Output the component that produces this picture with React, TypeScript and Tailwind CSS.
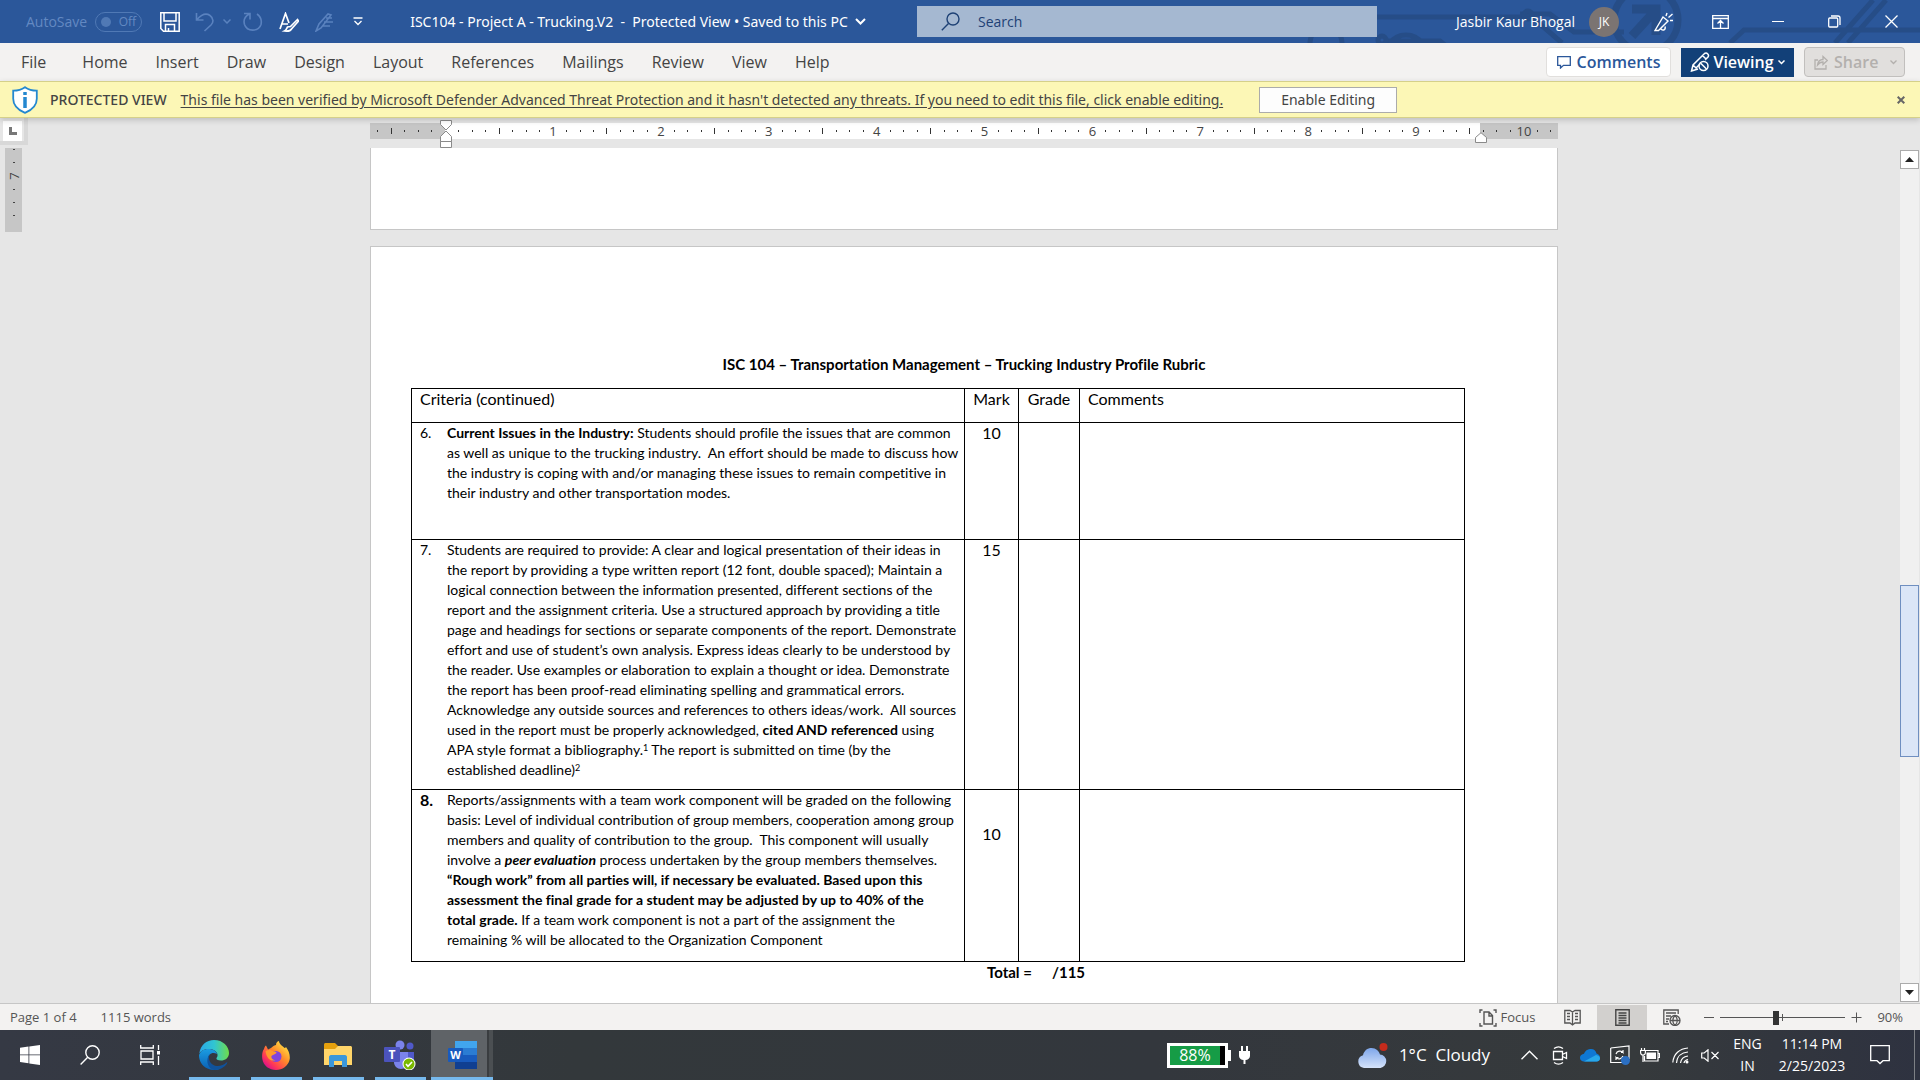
import type { ReactNode } from "react";

const tabs = ["Home", "Insert", "Draw", "Design", "Layout", "References", "Mailings", "Review", "View", "Help"];

// one entry per eighth of an inch, zero sits on the left margin
const ticks = Array.from({ length: 88 }, (_, i) => i - 5);

function Tick({ n }: { n: number }) {
  if (n > 0 && n % 8 === 0) return <span className="text-[13px] leading-4">{n / 8}</span>;
  if (n === 0) return null;
  if (n % 4 === 0) return <span className="h-[6px] w-px bg-[#333333]" />;
  return <span className="h-[2px] w-px bg-[#333333]" />;
}

function Ruler() {
  return (
    <div className="relative mx-auto mt-[5px] w-[1188px]">
      <div className="flex h-4 items-center bg-[linear-gradient(to_right,#c6c6c6_75px,#ffffff_75px,#ffffff_1110px,#c6c6c6_1110px)] pl-px text-[#444444]">
        {ticks.map((n) => (
          <div key={n} className="flex w-0 flex-1 items-center justify-center">
            <Tick n={n} />
          </div>
        ))}
      </div>
      <svg className="absolute -top-[3px] left-[70px]" width="12" height="28" viewBox="0 0 12 28" fill="#fff" stroke="#8a8a8a">
        <path d="M.5.5h11v4L6 10 .5 4.5zM.5 21.500v-5L6 11l5.500 5.500v5zM.5 21.500h11v6H.5z" />
      </svg>
      <svg className="absolute top-[9px] left-[1105px]" width="12" height="11" viewBox="0 0 12 11" fill="#fff" stroke="#8a8a8a">
        <path d="M.5 10.500v-5L6 .7l5.500 4.800v5z" />
      </svg>
    </div>
  );
}

function TitleBar() {
  return (
    <header className="relative flex h-[43px] shrink-0 items-center bg-[#2b579a] text-sm text-white">
      <svg className="absolute top-0 right-0" width="620" height="43" viewBox="0 0 620 43" fill="none" stroke="#264d87" strokeWidth="5">
        <path d="M77 17h160M90 43a20 20 0 0 1 32 0M10 43a16 16 0 0 1 32 0M85 41h55l10 8M152 17h80l30 26M220 14h30l24 18h50" />
        <circle cx="82" cy="40" r="4" />
        <circle cx="228" cy="15" r="4" />
        <circle cx="346" cy="20" r="32" strokeWidth="7" />
        <path d="M332 36l22-24M332 9h24v26" strokeWidth="9" />
        <path d="M430 43l14-13h176M535 43l38-43M548 43l38-43" />
      </svg>

      <div className="relative flex w-[917px] shrink-0 items-center">
        <label className="ml-[26px] flex items-center gap-2 text-[#6389c2]">
          AutoSave
          <input type="checkbox" className="peer sr-only" disabled />
          <span className="flex h-5 w-[47px] items-center justify-between rounded-full border border-[#5079b5] px-[5px] text-xs">
            <i className="size-[10px] rounded-full bg-[#5079b5]" />
            Off
          </span>
        </label>
        <button aria-label="Save" className="ml-[18px]">
          <svg width="20" height="20" viewBox="0 0 20 20" fill="none" stroke="#fff" strokeWidth="1.500">
            <path d="M.8.8h18.400v18.400H3.500L.8 16.500zM4 1v8h12V1M5.500 19v-6.500h9V19M8.500 19v-3" />
          </svg>
        </button>
        <button aria-label="Undo" className="ml-[15px]">
          <svg width="20" height="20" viewBox="0 0 20 20" fill="none" stroke="#5a82bf" strokeWidth="1.600">
            <path d="M1.500 1v7h7M2 7.500C6 3 11 .8 15 3.500c4 3 3.500 7 1 9.500L9.500 19" />
          </svg>
        </button>
        <svg className="ml-2" width="8" height="5" viewBox="0 0 8 5" fill="none" stroke="#5a82bf" strokeWidth="1.500">
          <path d="M.5.5L4 4 7.500.5" />
        </svg>
        <button aria-label="Redo" className="ml-3">
          <svg width="20" height="20" viewBox="0 0 20 20" fill="none" stroke="#5a82bf" strokeWidth="1.600">
            <path d="M1 1.500h6v6M6.500 2C1.500 4.500.5 9 1.500 12.500c2.500 7.500 14 7.500 16.500 0 1-4.500-.5-8-4-10.500" />
          </svg>
        </button>
        <button aria-label="Editor" className="ml-4">
          <svg width="20" height="20" viewBox="0 0 20 20" fill="none" stroke="#fff" strokeWidth="1.700">
            <path d="M1 17L6.500 1.500 10 11M3 12h6M18.500 7.500l-7 7-3 .5c-1 1.500-1 3-3 4 3 .3 6 0 7-2l7-8z" />
          </svg>
        </button>
        <button aria-label="Format painter" className="ml-4">
          <svg width="20" height="20" viewBox="0 0 20 20" fill="none" stroke="#5a82bf" strokeWidth="1.600">
            <path d="M1 19l3-7L13 2l3 1-10 13zM11 6h6M9 10h9M8 14h7" />
          </svg>
        </button>
        <button aria-label="Customize quick access" className="ml-[18px]">
          <svg width="10" height="9" viewBox="0 0 10 9" fill="none" stroke="#fff" strokeWidth="1.300">
            <path d="M.5 1h9M1.500 4L5 7.500 8.500 4" />
          </svg>
        </button>
        <h1 className="ml-[47px] flex items-center font-['Noto_Sans',sans-serif] whitespace-pre">
          {"ISC104 - Project A - Trucking.V2  -  Protected View • Saved to this PC"}
          <svg className="ml-[7px]" width="11" height="7" viewBox="0 0 11 7" fill="none" stroke="#fff" strokeWidth="2">
            <path d="M1 1l4.500 4.500L10 1" />
          </svg>
        </h1>
      </div>

      <label className="relative flex h-[31px] w-[460px] items-center gap-[18px] bg-[#a5b8d1] pl-6">
        <svg width="19" height="19" viewBox="0 0 19 19" fill="none" stroke="#1e4175" strokeWidth="1.400">
          <circle cx="12" cy="7" r="6" />
          <path d="M7.500 11.500L.8 18.200" />
        </svg>
        <input aria-label="Search" placeholder="Search" className="min-w-0 flex-1 bg-transparent outline-none placeholder:text-[#1e4175]" />
      </label>

      <div className="relative ml-auto flex items-center">
        <span>Jasbir Kaur Bhogal</span>
        <span className="mr-4 ml-[14px] flex size-[30px] items-center justify-center rounded-full bg-[#7b7472] text-xs">JK</span>
        <WinButton label="Designer">
          <svg width="20" height="20" viewBox="0 0 20 20" fill="none" stroke="#fff" strokeWidth="1.400">
            <path d="M1 18.500L9 5l5 4L4.500 18.500zM7 17c2 2 5 1 4-2.500M12 4l1-3M14.500 5.500L18.500 2M16 8.500h3" />
          </svg>
        </WinButton>
        <WinButton label="Ribbon display options">
          <svg width="17" height="14" viewBox="0 0 17 14" fill="none" stroke="#fff" strokeWidth="1.300">
            <path d="M.7.7h15.600v12.600H.7zM.7 3.500h15.600M8.500 13V6M5.500 8.500l3-3 3 3" />
          </svg>
        </WinButton>
        <WinButton label="Minimize">
          <span className="h-px w-3 bg-white" />
        </WinButton>
        <WinButton label="Restore">
          <svg width="13" height="13" viewBox="0 0 13 13" fill="none" stroke="#fff" strokeWidth="1.300">
            <rect x=".7" y="3" width="9" height="9" rx="1" />
            <path d="M3 1h7a2 2 0 0 1 2 2v7" />
          </svg>
        </WinButton>
        <WinButton label="Close">
          <svg width="13" height="13" viewBox="0 0 13 13" stroke="#fff" strokeWidth="1.300">
            <path d="M.5.5l12 12M12.500.5l-12 12" />
          </svg>
        </WinButton>
      </div>
    </header>
  );
}

function WinButton({ label, children }: { label: string; children: ReactNode }) {
  return (
    <button aria-label={label} className="flex h-[43px] w-[57px] items-center justify-center">
      {children}
    </button>
  );
}

function TabBar() {
  return (
    <nav className="flex h-[38px] shrink-0 items-center bg-[#f3f2f1] pr-[15px] text-base text-[#444444]">
      <button className="mr-2 ml-[7px] px-[14px]">File</button>
      {tabs.map((t) => (
        <button key={t} className="px-[14px]">{t}</button>
      ))}
      <button className="ml-auto flex h-[30px] w-[125px] items-center justify-center gap-[6px] rounded-sm border border-[#e1dfdd] bg-white font-semibold text-[#2b579a]">
        <svg width="14" height="13" viewBox="0 0 14 13" fill="none" stroke="#2b579a" strokeWidth="1.300">
          <path d="M.7.7h12.600v8.600H6.500L3.500 12V9.300H.7z" />
        </svg>
        Comments
      </button>
      <button className="ml-[10px] flex h-[29px] w-[113px] items-center justify-center gap-[3px] bg-[#124078] font-semibold text-white">
        <svg width="20" height="20" viewBox="0 0 20 20" fill="none" stroke="#fff" strokeWidth="1.500">
          <path d="M8 17l-6.500 2L3 13 14.500 1.500c2.500-1.500 5 1.500 3.500 3.500l-3 3M12.500 3.500L16 7M3 13l3 3 4-4" />
          <circle cx="13.500" cy="14" r="4.500" />
          <path d="M10.500 11l6 6" />
        </svg>
        Viewing
        <svg className="ml-px" width="7" height="5" viewBox="0 0 7 5" fill="none" stroke="#fff" strokeWidth="1.500">
          <path d="M.5.5l3 3 3-3" />
        </svg>
      </button>
      <button disabled className="ml-[10px] flex h-[30px] w-[101px] items-center rounded-sm border border-[#c1bfbd] bg-[#e1dfdd] pl-[9px] font-semibold text-[#b3b0ad]">
        <svg width="14" height="15" viewBox="0 0 14 15" fill="none" stroke="#b3b0ad" strokeWidth="1.300">
          <path d="M4 5H1v9h11v-4M3.500 10C4 6 6 4.500 9 4.500V1.500l4.300 4L9 9.500V7C6.500 7 5 8 3.500 10z" />
        </svg>
        <span className="ml-[6px]">Share</span>
        <svg className="ml-3" width="7" height="5" viewBox="0 0 7 5" fill="none" stroke="#b3b0ad" strokeWidth="1.300">
          <path d="M.5.5l3 3 3-3" />
        </svg>
      </button>
    </nav>
  );
}

function ProtectedBar() {
  return (
    <div className="relative z-10 flex h-[37px] shrink-0 items-center border-y border-[#d5d08a] bg-[#fcf7b6] font-['Noto_Sans',sans-serif] text-sm text-[#444444] shadow-[0_2px_6px_rgba(0,0,0,0.18)]">
      <svg className="ml-[12px]" width="26" height="28" viewBox="0 0 26 28" fill="#fff" stroke="#2488d0" strokeWidth="1.800">
        <path d="M13 1.200c3.500 2.500 7.500 3.500 11.800 3.500v8C24.800 19 20 24 13 26.800 6 24 1.200 19 1.200 12.700v-8C5.500 4.700 9.500 3.700 13 1.200z" />
        <path d="M13 6v3M13 11v11" strokeWidth="3.500" />
      </svg>
      <strong className="ml-3 font-medium">PROTECTED VIEW</strong>
      <a href="#" className="ml-[14px] whitespace-nowrap underline underline-offset-2">
        This file has been verified by Microsoft Defender Advanced Threat Protection and it hasn't detected any threats. If you need to edit this file, click enable editing.
      </a>
      <button className="ml-9 h-[26px] w-[138px] border border-[#ababab] bg-[#fdfdfd]">Enable Editing</button>
      <button aria-label="Dismiss" className="mr-[15px] ml-auto">
        <svg width="8" height="8" viewBox="0 0 8 8" stroke="#666" strokeWidth="2">
          <path d="M.7.7l6.600 6.600M7.300.7L.7 7.300" />
        </svg>
      </button>
    </div>
  );
}

function RubricRow({ no, mark, height, markClass, children }: { no: ReactNode; mark: string; height: string; markClass?: string; children: ReactNode }) {
  return (
    <tr className={height}>
      <td className="border border-black px-2 align-top">
        <div className="flex text-[14px] leading-5 whitespace-nowrap">
          <span className="w-[27px] shrink-0">{no}</span>
          <p>{children}</p>
        </div>
      </td>
      <td className={"border border-black text-center align-top " + (markClass ?? "")}>{mark}</td>
      <td className="border border-black" />
      <td className="border border-black" />
    </tr>
  );
}

function Rubric() {
  return (
    <>
      <h2 className="mb-3 text-center text-[15px] leading-6 font-bold">
        ISC 104 – Transportation Management – Trucking Industry Profile Rubric
      </h2>
      <table className="ml-[40px] w-[1054px] table-fixed border-collapse text-base leading-5">
        <colgroup>
          <col className="w-[553px]" />
          <col className="w-[54px]" />
          <col className="w-[61px]" />
          <col />
        </colgroup>
        <thead>
          <tr className="h-[34px] text-left">
            <th className="border border-black px-2 align-top font-normal">Criteria (continued)</th>
            <th className="border border-black text-center align-top font-normal">Mark</th>
            <th className="border border-black text-center align-top font-normal">Grade</th>
            <th className="border border-black px-2 align-top font-normal">Comments</th>
          </tr>
        </thead>
        <tbody>
          <RubricRow no="6." mark="10" height="h-[117px]">
            <b>Current Issues in the Industry:</b> Students should profile the issues that are common<br />
            as well as unique to the trucking industry.&nbsp; An effort should be made to discuss how<br />
            the industry is coping with and/or managing these issues to remain competitive in<br />
            their industry and other transportation modes.
          </RubricRow>
          <RubricRow no="7." mark="15" height="h-[250px]">
            Students are required to provide: A clear and logical presentation of their ideas in<br />
            the report by providing a type written report (12 font, double spaced); Maintain a<br />
            logical connection between the information presented, different sections of the<br />
            report and the assignment criteria. Use a structured approach by providing a title<br />
            page and headings for sections or separate components of the report. Demonstrate<br />
            effort and use of student’s own analysis. Express ideas clearly to be understood by<br />
            the reader. Use examples or elaboration to explain a thought or idea. Demonstrate<br />
            the report has been proof-read eliminating spelling and grammatical errors.<br />
            Acknowledge any outside sources and references to others ideas/work.&nbsp; All sources<br />
            used in the report must be properly acknowledged, <b>cited AND referenced</b> using<br />
            APA style format a bibliography.<sup className="text-[9px]">1</sup> The report is submitted on time (by the<br />
            established deadline)<sup className="text-[9px]">2</sup>
          </RubricRow>
          <RubricRow no={<b className="text-base leading-5">8.</b>} mark="10" height="h-[172px]" markClass="pt-[34px]">
            Reports/assignments with a team work component will be graded on the following<br />
            basis: Level of individual contribution of group members, cooperation among group<br />
            members and quality of contribution to the group.&nbsp; This component will usually<br />
            involve a <b><i>peer evaluation</i></b> process undertaken by the group members themselves.<br />
            <b>“Rough work” from all parties will, if necessary be evaluated. Based upon this</b><br />
            <b>assessment the final grade for a student may be adjusted by up to 40% of the</b><br />
            <b>total grade.</b> If a team work component is not a part of the assignment the<br />
            remaining % will be allocated to the Organization Component
          </RubricRow>
        </tbody>
      </table>
      <p className="ml-[616px] flex gap-5 text-[15px] leading-5 font-bold">
        <span>Total =</span>
        <span>/115</span>
      </p>
    </>
  );
}

function ScrollArrow({ label, d }: { label: string; d: string }) {
  return (
    <button aria-label={label} className="flex h-[19px] w-full items-center justify-center border border-[#ababab] bg-white">
      <svg width="9" height="5" viewBox="0 0 9 5" fill="#222"><path d={d} /></svg>
    </button>
  );
}

function Workspace() {
  return (
    <main className="flex min-h-0 flex-1 bg-[#e6e6e6]">
      <div className="flex w-7 shrink-0 flex-col">
        <div className="flex h-[27px] items-start border-r-4 border-b-4 border-[#d8d8d8] pt-[3px] pl-[3px]">
          <button aria-label="Tab stop" className="flex h-5 w-[19px] items-center justify-center bg-white">
            <span className="size-2 border-b-[3px] border-l-[3px] border-[#777777]" />
          </button>
        </div>
        <div className="mt-[3px] ml-[5px] flex h-[84px] w-[17px] flex-col items-center bg-[#c6c6c6] text-[#444444]">
          <span className="mt-px h-px w-[2px] bg-[#444444]" />
          <span className="mt-3 h-px w-[2px] bg-[#444444]" />
          <span className="my-[6px] h-[14px] -rotate-90 text-[13px] leading-[14px]">7</span>
          <span className="h-px w-[2px] bg-[#444444]" />
          <span className="mt-3 h-px w-[2px] bg-[#444444]" />
          <span className="mt-3 h-px w-[2px] bg-[#444444]" />
        </div>
      </div>

      <div className="flex min-w-0 flex-1 flex-col">
        <Ruler />
        <div className="mt-[9px] min-h-0 flex-1 overflow-hidden">
          <div className="mx-auto h-[82px] w-[1188px] border border-t-0 border-[#c6c6c6] bg-white" />
          <article className="mx-auto mt-4 min-h-full w-[1188px] border border-[#c6c6c6] bg-white pt-[105px] font-[Lato,sans-serif] text-black [font-variant-ligatures:none]">
            <Rubric />
          </article>
        </div>
      </div>

      <div className="flex w-5 shrink-0 flex-col pt-8 pr-px pb-px">
        <ScrollArrow label="Scroll up" d="M4.500 0L9 5H0z" />
        <div className="flex flex-1 flex-col bg-[#f0f0f0]">
          <div className="mt-[416px] h-[172px] border border-[#6f8fc0] bg-[#dbe6f7]" />
        </div>
        <ScrollArrow label="Scroll down" d="M4.500 5L9 0H0z" />
      </div>
    </main>
  );
}

function StatusBar() {
  return (
    <footer className="flex h-[27px] shrink-0 items-center border-t border-[#c6c6c6] bg-[#f3f2f1] pt-px pr-[17px] pl-[10px] text-[13px] text-[#555555]">
      <span>Page 1 of 4</span>
      <span className="ml-6">1115 words</span>
      <button className="ml-auto flex items-center gap-[3px]">
        <svg width="18" height="18" viewBox="0 0 18 18" fill="none" stroke="#555" strokeWidth="1.400">
          <path d="M3.500 1H1v3M14.500 1H17v3M3.500 17H1v-3M14.500 17H17v-3M5 3h5l3.500 3.500V15H5zM10 3v4h3.500" />
        </svg>
        Focus
      </button>
      <button aria-label="Read mode" className="ml-3 flex h-[26px] w-[50px] items-center justify-center">
        <svg width="17" height="17" viewBox="0 0 17 17" fill="none" stroke="#555" strokeWidth="1.300">
          <path d="M8.500 3v13M.8 1.500H6L8.500 3 11 1.500h5.200v12.500H11L8.500 16 6 14H.8zM3 4.500h3M3 7.500h3M3 10.500h3M11 4.500h3M11 7.500h3M11 10.500h3" />
        </svg>
      </button>
      <button aria-label="Print layout" className="flex h-[26px] w-[50px] items-center justify-center bg-[#d2d0ce]">
        <svg width="15" height="17" viewBox="0 0 15 17" fill="none" stroke="#444" strokeWidth="1.400">
          <path d="M.8.8h13.400v15.400H.8zM3.500 4h8M3.500 6.500h8M3.500 9h8M3.500 11.500h8M3.500 14h8" />
        </svg>
      </button>
      <button aria-label="Web layout" className="flex h-[26px] w-[50px] items-center justify-center">
        <svg width="18" height="17" viewBox="0 0 18 17" fill="none" stroke="#555" strokeWidth="1.300">
          <path d="M6 15H.8V1h14.400v4M3 4h10M3 7h5M3 10h3M3 12.500h2" />
          <circle cx="12" cy="11.500" r="5" />
          <path d="M7 11.500h10M12 6.500c-3 3-3 7 0 10M12 6.500c3 3 3 7 0 10" />
        </svg>
      </button>
      <button aria-label="Zoom out" className="ml-[7px] h-px w-[10px] bg-[#555555]" />
      <span className="relative mx-[6px] flex w-[125px] items-center">
        <span className="absolute left-[62px] h-[7px] w-px bg-[#555555]" />
        <input
          type="range"
          aria-label="Zoom"
          min={10}
          max={190}
          defaultValue={90}
          className="h-px w-full appearance-none bg-[#555555] [&::-webkit-slider-thumb]:h-[14px] [&::-webkit-slider-thumb]:w-[6px] [&::-webkit-slider-thumb]:appearance-none [&::-webkit-slider-thumb]:bg-[#333333]"
        />
      </span>
      <button aria-label="Zoom in">
        <svg width="11" height="11" viewBox="0 0 11 11" stroke="#555"><path d="M5.500.5v10M.5 5.500h10" /></svg>
      </button>
      <span className="ml-[15px]">90%</span>
    </footer>
  );
}

function TaskApp({ label, active, children }: { label: string; active?: boolean; children: ReactNode }) {
  return (
    <button aria-label={label} className={"relative flex h-[50px] w-[62px] items-center justify-center " + (active ? "bg-[linear-gradient(90deg,#5f6367_56px,#3a3d40_56px,#3a3d40_58px,#4b4f52_58px)]" : "")}>
      {children}
      <span className={"absolute bottom-0 h-[3px] bg-[#76b9ed] " + (active ? "w-full" : "w-[51px]")} />
    </button>
  );
}

function Taskbar() {
  return (
    <div className="flex h-[50px] shrink-0 items-center bg-[linear-gradient(90deg,#353944,#33383b_30%,#33373d_60%,#363a3c_85%,#2e3240)] text-white">
      <button aria-label="Start" className="flex w-[60px] justify-center">
        <svg width="20" height="20" viewBox="0 0 20 20" fill="#fff">
          <path d="M0 2.800l8.500-1.200v7.900H0zM9.300 1.500L20 0v9.500H9.300zM0 10.300h8.500v8L0 17.100zM9.300 10.300H20V20L9.300 18.500z" />
        </svg>
      </button>
      <button aria-label="Search" className="flex w-[60px] justify-center">
        <svg width="20" height="20" viewBox="0 0 20 20" fill="none" stroke="#fff" strokeWidth="1.400">
          <circle cx="12.500" cy="7.500" r="6.700" />
          <path d="M7.700 12.300L.6 19.400" />
        </svg>
      </button>
      <button aria-label="Task view" className="mr-[3px] flex w-[60px] justify-center">
        <svg width="21" height="20" viewBox="0 0 21 20" fill="none" stroke="#fff" strokeWidth="1.300">
          <path d="M.7 0v3h12.600V0M.7 20v-3h12.600v3M1 6h12v8H1zM18.500 0v5M18.500 11v9" />
          <path d="M17 6h3v3.500h-3z" fill="#fff" stroke="none" />
        </svg>
      </button>

      <TaskApp label="Edge">
        <svg width="30" height="30" viewBox="0 0 30 30">
          <defs>
            <linearGradient id="edgeTop" x1="0" x2="1"><stop offset="0" stopColor="#2aa7e8" /><stop offset=".5" stopColor="#30c5d2" /><stop offset="1" stopColor="#6fdc4a" /></linearGradient>
            <linearGradient id="edgeLeft" x1="0" y1="0" x2="0" y2="1"><stop offset="0" stopColor="#1b9de2" /><stop offset="1" stopColor="#0a5fb4" /></linearGradient>
          </defs>
          <path d="M.3 13.500C1.500 5 7.500 0 15 0c9 0 15 6.500 15 13 0 5-4 7.500-8 7.500-3.500 0-5-1.200-4.500-2.500 3-3.500-.5-8.500-6-9C6 8.500 2 10.500.3 13.500z" fill="url(#edgeTop)" />
          <path d="M0 15C1.500 10.500 6 8.500 11 9c4 .5 6.500 2.500 7 5-6-3-10 2-8.500 7 1.500 5 6 8 11 8-3 1.500-8 1.500-12-.5C3 26 0 21 0 15z" fill="url(#edgeLeft)" />
          <path d="M11.500 13.500C8 18 11 25 17 26c4 .5 8-1 10.500-3.500.8-.5 1 .3.500 1-3 4.500-8.500 7-14 6.300C7.500 27 6.500 18 11.500 13.500z" fill="#10529b" />
        </svg>
      </TaskApp>
      <TaskApp label="Firefox">
        <svg width="28" height="29" viewBox="0 0 28 29">
          <defs>
            <linearGradient id="fox" x1=".9" y1=".1" x2=".2" y2=".9"><stop offset="0" stopColor="#ffe845" /><stop offset=".45" stopColor="#ff8a2a" /><stop offset=".8" stopColor="#ff3a55" /><stop offset="1" stopColor="#e01584" /></linearGradient>
          </defs>
          <path d="M4 4.500l2 4 3-1.500C11 5 13 4 14 4c0-2 1-3.500 3-4 0 3 3 4.500 5.500 7 1-.3 1.500-.5 1.500-1 3 4 4.500 9 3.500 13C26 25 20.500 29 14 29S1.500 25 .3 18C-.3 13.500.5 10 2 8c.3-1.500 1-3 2-3.500z" fill="url(#fox)" />
          <circle cx="14" cy="15.500" r="5.500" fill="#8045dc" />
          <path d="M3.500 10c3-1.500 6-1.500 8 .5 2 0 3 .5 3 1.500-2 2-4 1.500-5 3-.5 2 1 4 4 4-4 2-9-1-10-9z" fill="#ff9a2d" />
        </svg>
      </TaskApp>
      <TaskApp label="File Explorer">
        <svg width="28" height="24" viewBox="0 0 28 24">
          <path d="M0 1.500C0 .7.700 0 1.500 0H11l3 3v5H0z" fill="#e5a00d" />
          <path d="M0 6h11l3-3h12.500c.8 0 1.500.7 1.500 1.500V22H0z" fill="#ffd56a" />
          <path d="M5 24V14c0-1 .8-2 2-2h14c1.200 0 2 1 2 2v10h-5v-6h-8v6z" fill="#3b97da" />
        </svg>
      </TaskApp>
      <TaskApp label="Teams">
        <svg width="32" height="30" viewBox="0 0 32 30">
          <circle cx="16" cy="5" r="4.500" fill="#7b83eb" />
          <circle cx="26" cy="6" r="3.500" fill="#5059c9" />
          <path d="M21 12h9v9c0 3-2 5-5 5h-4z" fill="#5059c9" />
          <path d="M10 12h14v10c0 4-3 7-7 7s-7-3-7-7z" fill="#7b83eb" />
          <rect y="7" width="16" height="15" rx="1" fill="#4b53bc" />
          <text x="8" y="19" fontSize="12" fontWeight="700" textAnchor="middle" fill="#fff">T</text>
          <circle cx="25" cy="24" r="6.500" fill="#fff" />
          <circle cx="25" cy="24" r="5.500" fill="#79b800" />
          <path d="M22 24l2 2.300 4-4.300" fill="none" stroke="#fff" strokeWidth="1.600" />
        </svg>
      </TaskApp>
      <TaskApp label="Word" active>
        <svg width="29" height="28" viewBox="0 0 29 28">
          <path d="M7 0h22v7H7z" fill="#41a5ee" />
          <path d="M7 7h22v7H7z" fill="#2b7cd3" />
          <path d="M7 14h22v7H7z" fill="#185abd" />
          <path d="M7 21h22v7H7z" fill="#103f91" />
          <rect y="7" width="15" height="14" rx="1" fill="#185abd" />
          <text x="7.500" y="18" fontSize="11" fontWeight="700" textAnchor="middle" fill="#fff">W</text>
        </svg>
      </TaskApp>

      <div className="ml-auto flex items-center">
        <div className="flex h-[25px] w-[61px] items-center border-[3px] border-white bg-black">
          <span className="flex h-full w-[50px] items-center justify-center bg-[#169c46] text-base">88%</span>
        </div>
        <span className="h-[11px] w-[3px] bg-white" />
        <svg className="ml-2" width="11" height="18" viewBox="0 0 11 18" fill="#fff">
          <path d="M2 0h2v5h3V0h2v5h2v5c0 2-2 4-4.500 4v4h-2v-4C2 14 0 12 0 10V5h2z" />
        </svg>
        <button className="ml-[107px] flex items-center text-[17px] whitespace-pre">
          <svg className="mr-[11px]" width="31" height="25" viewBox="0 0 31 25">
            <defs>
              <linearGradient id="cloud" x1="0" y1="0" x2="0" y2="1"><stop offset="0" stopColor="#7ea6ea" /><stop offset="1" stopColor="#d5e3fa" /></linearGradient>
            </defs>
            <path d="M7 25a6.500 6.500 0 0 1-1-12.700C7 7.500 10.500 5 14.500 5c4.500 0 7.500 3 8.500 6.500A6.800 6.800 0 0 1 23.500 25z" fill="url(#cloud)" />
            <circle cx="26.500" cy="4" r="4" fill="#c42b1c" />
          </svg>
          {"1°C  Cloudy"}
        </button>
        <button aria-label="Show hidden icons" className="ml-[31px]">
          <svg width="17" height="10" viewBox="0 0 17 10" fill="none" stroke="#fff" strokeWidth="1.400"><path d="M.5 9.300l8-8 8 8" /></svg>
        </button>
        <div className="ml-[7px] flex items-center *:flex *:w-[30px] *:justify-center">
          <span>
            <svg width="16" height="19" viewBox="0 0 16 19" fill="none" stroke="#fff" strokeWidth="1.300">
              <path d="M1.500 5.500h9v8h-9zM10.500 8.500l4-2v6l-4-2M2 2.500c3-2.200 6-2.200 9 0M2 16.500c3 2.200 6 2.200 9 0" />
            </svg>
          </span>
          <span>
            <svg width="20" height="13" viewBox="0 0 20 13">
              <path d="M5 12.500C1 12.500 0 10.500 0 8.500S2 5 4 4.800C5.500 1 8.500 0 11 0c3 0 5 2 5.500 4.500C19 5 20 7 20 8.500s-1 4-3.500 4z" fill="#0f78d4" />
              <path d="M4 12.500L16 6c2.500.3 4 1.800 4 3.500s-1.500 3-3.500 3z" fill="#28a8ea" />
            </svg>
          </span>
          <span>
            <svg width="20" height="20" viewBox="0 0 20 20" fill="none" stroke="#fff" strokeWidth="1.200">
              <path d="M.7 3L19 1v13M.7 3v14.500H12M6 9c1-3 5-4 7-1.500V5M13.500 7.500H11M13 11c-1 3-5 4-7 1.500V15M6 12.500h2.500" />
              <circle cx="15.500" cy="15.500" r="4.500" fill="#2b6fc2" stroke="none" />
            </svg>
          </span>
          <span>
            <svg width="20" height="14" viewBox="0 0 20 14" fill="none" stroke="#fff" strokeWidth="1.200">
              <path d="M5.500 2.500H18v10.500H4.500V8M18 5.500h1.500v4H18M1.500 0v2M4.500 0v2M.6 2.500h4.800v2c0 1.500-1 2.500-2.400 2.500S.6 6 .6 4.500zM3 7v7" />
              <path d="M6.500 4.500H16v6.500H6.500z" fill="#fff" stroke="none" />
            </svg>
          </span>
          <span>
            <svg width="17" height="17" viewBox="0 0 17 17" fill="none" stroke="#fff" strokeWidth="1.200">
              <path d="M.8 15.500C1.500 7 7.500 1.500 16 1M4.500 16C5 9.500 9.500 5.500 16 5M8.500 16c.5-4 3-6.500 7.500-7M12 16c.3-1.800 1.500-3 4-3.500" />
              <circle cx="15" cy="15" r="1.500" fill="#fff" stroke="none" />
            </svg>
          </span>
          <span>
            <svg width="18" height="13" viewBox="0 0 18 13" fill="none" stroke="#fff" strokeWidth="1.200">
              <path d="M.7 4h2.500L7 .8v11.400L3.200 9H.7zM10.500 3l7 7M17.500 3l-7 7" />
            </svg>
          </span>
        </div>
        <button className="w-[45px] text-center text-sm leading-[22px]">ENG<br />IN</button>
        <button className="w-[84px] text-center text-sm leading-[22px] whitespace-nowrap">11:14 PM<br />2/25/2023</button>
        <button aria-label="Notifications" className="flex w-[52px] justify-center">
          <svg width="20" height="20" viewBox="0 0 20 20" fill="none" stroke="#fff" strokeWidth="1.300">
            <path d="M.7.7h18.600v15h-6.300L10 18.500 7 15.700H.7z" />
          </svg>
        </button>
        <span className="mr-[5px] ml-2 h-[50px] w-px bg-[#7d8085]" />
      </div>
    </div>
  );
}

export default function App() {
  return (
    <div className="flex h-screen flex-col overflow-hidden font-['Open_Sans',sans-serif]">
      <TitleBar />
      <TabBar />
      <ProtectedBar />
      <Workspace />
      <StatusBar />
      <Taskbar />
    </div>
  );
}
